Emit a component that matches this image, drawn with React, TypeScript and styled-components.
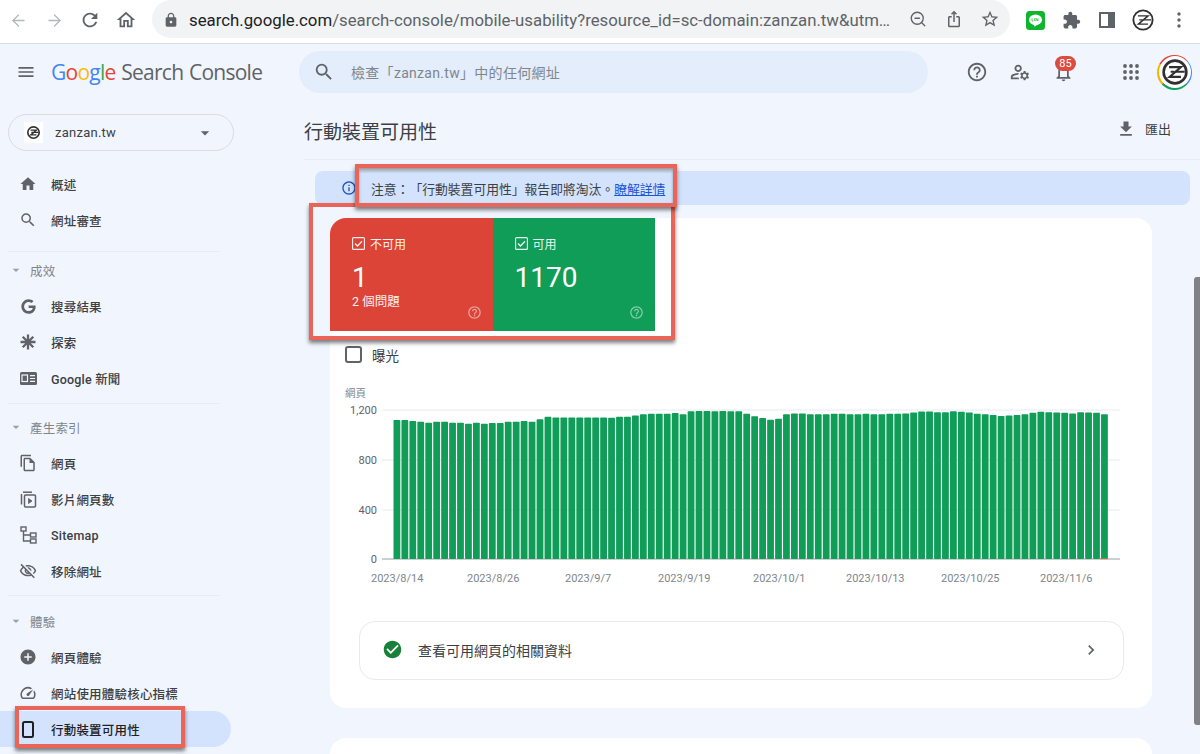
import React, { type FC, type ReactNode } from 'react'
import styled, { createGlobalStyle } from 'styled-components'
import { ArrowLeft, ArrowRight, ZoomOut } from 'lucide-react'
import {
  MdLock,
  MdIosShare,
  MdExtension,
  MdMenu,
  MdSearch,
  MdHelpOutline,
  MdOutlineManageAccounts,
  MdOutlineNotifications,
  MdArrowDropDown,
  MdHome,
  MdOutlineHome,
  MdRefresh,
  MdStarOutline,
  MdOutlineFileCopy,
  MdOutlineVisibilityOff,
  MdAddCircle,
  MdOutlineSpeed,
  MdFileDownload,
  MdInfoOutline,
  MdCheckCircle,
  MdChevronRight,
} from 'react-icons/md'
import { FaGoogle } from 'react-icons/fa'

const FONT = `Roboto, "Noto Sans CJK TC", sans-serif`

const GlobalStyle = createGlobalStyle`
  html, body {
    margin: 0;
    padding: 0;
    height: 100%;
    overflow: hidden;
    background: #f1f5fd;
    font-family: ${FONT};
    text-spacing-trim: space-all;
  }
`

const Page = styled.div`
  position: relative;
  width: 1200px;
  height: 754px;
  overflow: hidden;
  display: flex;
  flex-direction: column;
`

/* browser chrome */
const Toolbar = styled.div`
  height: 43px;
  flex: none;
  background: #fff;
  border-bottom: 1px solid #dadce0;
  display: flex;
  align-items: flex-start;
`

const ToolSlot = styled.div<{ $color?: string }>`
  width: 36px;
  height: 40px;
  flex: none;
  display: flex;
  align-items: center;
  justify-content: center;
  color: ${(p) => p.$color || '#5f6368'};
`

const NavButtons = styled.div`
  display: flex;
  width: 152px;
  flex: none;
`

const AddressBar = styled.div`
  width: 858px;
  height: 38px;
  flex: none;
  box-sizing: border-box;
  padding: 0 2px 0 11px;
  background: #f1f3f4;
  border-radius: 19px;
  display: flex;
  align-items: center;
`

const LockSlot = styled.div`
  width: 16px;
  flex: none;
  margin-right: 10px;
  color: #5f6368;
  display: flex;
  padding-top: 2px;
`

const Url = styled.div`
  width: 711px;
  flex: none;
  font-size: 16.8px;
  color: #5f6368;
  white-space: nowrap;
  overflow: hidden;
  padding-top: 1px;
  b {
    font-weight: 400;
    color: #202124;
  }
`

const Extensions = styled.div`
  display: flex;
  margin-left: 7px;
`

/* search console header */
const Header = styled.div`
  height: 56px;
  flex: none;
  display: flex;
  align-items: center;
`

const Burger = styled.div`
  width: 51px;
  flex: none;
  padding-left: 16px;
  box-sizing: border-box;
  display: flex;
  color: #5f6368;
`

const Brand = styled.div`
  width: 248px;
  flex: none;
  font-family: "Open Sans", Roboto, sans-serif;
  font-size: 21px;
  letter-spacing: -0.75px;
  word-spacing: 1px;
  color: #5f6368;
  white-space: nowrap;
`

const Letter = styled.span<{ $c: string }>`
  color: ${(p) => p.$c};
`

const SearchBox = styled.div`
  width: 629px;
  height: 42px;
  flex: none;
  box-sizing: border-box;
  padding-left: 14px;
  border-radius: 21px;
  background: #e3edfb;
  display: flex;
  align-items: center;
  gap: 16px;
  color: #5f6368;
  font-size: 14px;
  letter-spacing: 0.3px;
`

const SearchHint = styled.span`
  color: #80868b;
`

const HeaderIcons = styled.div`
  display: flex;
  align-items: center;
  margin-left: 27px;
`

const HeaderIcon = styled.div<{ $gap?: number }>`
  position: relative;
  width: 43.5px;
  height: 44px;
  flex: none;
  margin-right: ${(p) => p.$gap || 0}px;
  color: #5f6368;
  display: flex;
  align-items: center;
  justify-content: center;
`

const Badge = styled.span`
  position: absolute;
  top: 6px;
  left: 13px;
  width: 21px;
  height: 15px;
  border-radius: 8px;
  background: #dc4b40;
  color: #fff;
  font-size: 11px;
  line-height: 15px;
  text-align: center;
`

const AvatarRing = styled.div`
  width: 35px;
  height: 35px;
  flex: none;
  margin-left: 4px;
  border-radius: 50%;
  background: conic-gradient(#db4437 0 50deg, #4285f4 50deg 135deg, #0f9d58 135deg 225deg, #f4b400 225deg 300deg, #db4437 300deg);
  display: flex;
  align-items: center;
  justify-content: center;
`

const AvatarInner = styled.div`
  width: 32px;
  height: 32px;
  border-radius: 50%;
  background: #fff;
  display: flex;
  align-items: center;
  justify-content: center;
`

/* body */
const Body = styled.div`
  flex: 1;
  display: flex;
  min-height: 0;
`

const Sidebar = styled.nav`
  width: 240px;
  flex: none;
  padding-top: 14px;
  box-sizing: border-box;
`

const PropertyPicker = styled.div`
  width: 226px;
  height: 37px;
  margin: 0 0 15px 8px;
  box-sizing: border-box;
  border: 1px solid #dadce0;
  border-radius: 19px;
  display: flex;
  align-items: center;
  padding: 0 18px 0 15px;
  font-size: 13px;
  letter-spacing: 0.25px;
  color: #3c4043;
`

const Favicon = styled.span`
  width: 19px;
  height: 21px;
  flex: none;
  background: #fff;
  display: flex;
  align-items: center;
  justify-content: center;
`

const PropertyName = styled.span`
  flex: 1;
  margin-left: 12px;
`

const NavRow = styled.div<{ $active?: boolean }>`
  width: 231px;
  height: 36px;
  box-sizing: border-box;
  padding-left: 19px;
  display: flex;
  align-items: center;
  gap: 14px;
  font-size: 12.5px;
  font-weight: 500;
  letter-spacing: 0.2px;
  color: ${(p) => (p.$active ? '#202124' : '#3c4043')};
  background: ${(p) => (p.$active ? '#d3e3fd' : 'transparent')};
  border-radius: ${(p) => (p.$active ? '0 18px 18px 0' : '0')};
`

const NavIcon = styled.span<{ $active?: boolean }>`
  width: 18px;
  height: 18px;
  flex: none;
  display: flex;
  align-items: center;
  justify-content: center;
  color: ${(p) => (p.$active ? '#202124' : '#5f6368')};
`

const SectionRow = styled.div`
  height: 36px;
  display: flex;
  align-items: center;
  padding-left: 8px;
  font-size: 12.5px;
  color: #80868b;
  gap: 6px;
  letter-spacing: 0.2px;
`

const Caret = styled.span`
  width: 16px;
  display: flex;
  color: #9aa0a6;
`

const Rule = styled.div<{ $top: number; $bottom: number }>`
  width: 212px;
  height: 1px;
  margin: ${(p) => p.$top}px 0 ${(p) => p.$bottom}px 8px;
  background: #e8ecf3;
`

const Main = styled.main`
  flex: 1;
  min-width: 0;
  padding-left: 64px;
`

const TitleBar = styled.div`
  height: 60px;
  box-sizing: border-box;
  border-bottom: 1px solid #e8ecf3;
  padding: 2px 29px 0 0;
  display: flex;
  align-items: center;
  justify-content: space-between;
`

const Title = styled.h1`
  margin: 0;
  font-size: 19px;
  font-weight: 400;
  color: #3c4043;
`

const ExportButton = styled.div`
  display: flex;
  align-items: center;
  gap: 9px;
  font-size: 13px;
  color: #3c4043;
  margin-top: -4px;
`

const Notice = styled.div`
  margin: 11px 10px 13px 11px;
  height: 34px;
  box-sizing: border-box;
  padding-left: 26px;
  border-radius: 8px;
  background: #d3e3fd;
  display: flex;
  align-items: center;
  gap: 14px;
  font-size: 12.8px;
  color: #3c4043;
  a {
    color: #1a56d6;
    text-decoration: underline;
  }
`

const InfoIcon = styled.span`
  display: flex;
  color: #1a56c4;
`

const Card = styled.section`
  width: 822px;
  margin-left: 26px;
  height: 490px;
  box-sizing: border-box;
  background: #fff;
  border-radius: 16px;
`

const NextCard = styled(Card)`
  margin-top: 30px;
`

const Tiles = styled.div`
  display: flex;
`

const Tile = styled.div<{ $bg: string; $round?: boolean }>`
  position: relative;
  width: 162.5px;
  height: 113px;
  box-sizing: border-box;
  padding: 17px 0 0 22px;
  background: ${(p) => p.$bg};
  color: #fff;
  border-top-left-radius: ${(p) => (p.$round ? '16px' : '0')};
`

const TileLabel = styled.div`
  display: flex;
  align-items: center;
  gap: 5px;
  height: 16px;
  font-size: 12px;
  opacity: 0.92;
`

const TileValue = styled.div`
  font-size: 28px;
  line-height: 34px;
  margin-top: 10px;
`

const TileNote = styled.div`
  font-size: 12.5px;
  line-height: 16px;
  margin-top: -1px;
  opacity: 0.92;
`

const TileHelp = styled.span`
  position: absolute;
  right: 11px;
  bottom: 11px;
  display: flex;
  opacity: 0.5;
`

const ImpressionRow = styled.label`
  display: flex;
  align-items: center;
  gap: 10px;
  margin: 15px 0 0 15px;
  height: 17px;
  font-size: 13.5px;
  color: #3c4043;
`

const EmptyBox = styled.span`
  width: 17px;
  height: 17px;
  box-sizing: border-box;
  border: 2px solid #5f6368;
  border-radius: 3px;
`

const ChartSvg = styled.svg`
  display: block;
  width: 790px;
  height: 223px;
  margin: 17px 0 0 10px;
  font-family: ${FONT};
`

const LinkRow = styled.div`
  width: 765px;
  height: 59px;
  margin: 18px 0 0 29px;
  box-sizing: border-box;
  padding: 0 22px 2px 22px;
  border: 1px solid #e8eaed;
  border-radius: 16px;
  display: flex;
  align-items: center;
  gap: 15px;
  font-size: 14px;
  color: #3c4043;
`

const LinkText = styled.span`
  flex: 1;
`

const LinkChevron = styled.span`
  display: flex;
  color: #5f6368;
`

const Scrollbar = styled.div`
  position: absolute;
  right: 0;
  top: 277px;
  width: 6px;
  height: 448px;
  border-radius: 3px 0 0 3px;
  background: #7f8286;
`

const Callout = styled.div<{ $x: number; $y: number; $w: number; $h: number; $inset?: boolean }>`
  position: absolute;
  left: ${(p) => p.$x}px;
  top: ${(p) => p.$y}px;
  width: ${(p) => p.$w}px;
  height: ${(p) => p.$h}px;
  box-sizing: border-box;
  border: 4px solid #e9655a;
  box-shadow: 0 3px 4px rgba(0, 0, 0, 0.5) ${(p) => (p.$inset ? ', inset 0 3px 3px rgba(0, 0, 0, 0.35)' : '')};
  pointer-events: none;
`

const ZLogo: FC<{ size: number; weight?: number }> = ({ size, weight = 2 }) => (
  <svg width={size} height={size} viewBox="0 0 24 24" fill="none" stroke="#303030" strokeWidth={weight}>
    <circle cx="12" cy="12" r="10.500" />
    <path d="M6.500 7.500h11L7 16.500h10.500" strokeWidth={weight * 0.8} />
    <path d="M8 11.800h3.500M12.500 11.800h8.500" strokeWidth={weight * 0.7} />
  </svg>
)

const LineIcon: FC = () => (
  <svg width="19" height="19" viewBox="0 0 19 19">
    <rect width="19" height="19" rx="3.500" fill="#0fb52d" />
    <ellipse cx="9.500" cy="8.700" rx="6.500" ry="5.300" fill="#fff" />
    <path d="M8 13.500c.3.800 0 1.800.3 2 .5.200 3-1.600 4.200-2.700z" fill="#fff" />
    <path d="M6 7.300v2.700h1.300M8.600 7.300v2.700M10 10V7.300l2 2.700V7.300" fill="none" stroke="#0fb52d" strokeWidth="0.700" />
  </svg>
)

const SidePanelIcon: FC = () => (
  <svg width="16" height="16" viewBox="0 0 16 16">
    <rect x="1" y="1" width="14" height="14" fill="none" stroke="#5f6368" strokeWidth="2" />
    <rect x="9" y="1" width="6" height="14" fill="#5f6368" />
  </svg>
)

const DotsIcon: FC = () => (
  <svg width="4" height="16" viewBox="0 0 4 16" fill="#5f6368">
    <circle cx="2" cy="2" r="1.700" />
    <circle cx="2" cy="8" r="1.700" />
    <circle cx="2" cy="14" r="1.700" />
  </svg>
)

const AppsIcon: FC = () => (
  <svg width="16" height="16" viewBox="0 0 16 16" fill="#5f6368">
    {[2, 8, 14].flatMap((y) => [2, 8, 14].map((x) => <circle key={`${x}-${y}`} cx={x} cy={y} r="1.900" />))}
  </svg>
)

const SparkIcon: FC = () => (
  <svg width="16" height="16" viewBox="0 0 16 16" stroke="#5f6368" strokeWidth="2.300">
    <path d="M8 .5v15M.5 8h15M2.700 2.700l10.600 10.600M13.300 2.700 2.700 13.300" />
  </svg>
)

const NewsIcon: FC = () => (
  <svg width="17" height="15" viewBox="0 0 17 15">
    <rect width="17" height="13" y="1" rx="1.500" fill="#5f6368" />
    <rect x="2" y="4" width="5.500" height="6.500" fill="none" stroke="#f1f5fd" strokeWidth="1.200" />
    <path d="M10 4.700h5M10 7.500h5M10 10.300h5" stroke="#f1f5fd" strokeWidth="1.200" />
  </svg>
)

const VideoPagesIcon: FC = () => (
  <svg width="17" height="17" viewBox="0 0 17 17" fill="none" stroke="#5f6368" strokeWidth="1.500">
    <path d="M1.500 3v10.500" />
    <path d="M3 1.200h9" />
    <rect x="4.500" y="4" width="11" height="12" rx="1" />
    <path d="M8.500 7.500v5l3.500-2.500z" fill="#5f6368" strokeWidth="0.800" />
  </svg>
)

const SitemapIcon: FC = () => (
  <svg width="17" height="18" viewBox="0 0 17 18" fill="none" stroke="#5f6368" strokeWidth="1.400">
    <rect x="1" y="1" width="5" height="4" />
    <rect x="10.500" y="7" width="5.500" height="4" />
    <rect x="10.500" y="13" width="5.500" height="4" />
    <path d="M3.500 5v10h7M3.500 9h7" />
  </svg>
)

const PhoneIcon: FC = () => (
  <svg width="14" height="17" viewBox="0 0 14 17">
    <rect x="2" y="1" width="10" height="15" rx="1.500" fill="none" stroke="#202124" strokeWidth="2" />
  </svg>
)

const TileCheck: FC = () => (
  <svg width="13" height="13" viewBox="0 0 13 13" fill="none" stroke="#fff" strokeWidth="1.100">
    <rect x="0.600" y="0.600" width="11.800" height="11.800" rx="1" />
    <path d="M3 6.500l2.500 2.500 4.500-4.800" strokeWidth="1.300" />
  </svg>
)

const NavItem: FC<{ icon: ReactNode; label: string; active?: boolean }> = ({ icon, label, active }) => (
  <NavRow $active={active}>
    <NavIcon $active={active}>{icon}</NavIcon>
    {label}
  </NavRow>
)

const Section: FC<{ label: string }> = ({ label }) => (
  <SectionRow>
    <Caret>
      <MdArrowDropDown size={16} />
    </Caret>
    {label}
  </SectionRow>
)

const BARS = [
  1120, 1120, 1112, 1106, 1098, 1106, 1106, 1098, 1098, 1090, 1098, 1090, 1095, 1095, 1105, 1105, 1112, 1105, 1125,
  1145, 1140, 1140, 1140, 1140, 1140, 1140, 1140, 1138, 1146, 1146, 1155, 1165, 1170, 1170, 1170, 1175, 1165, 1190,
  1192, 1192, 1190, 1192, 1190, 1190, 1170, 1150, 1135, 1122, 1130, 1165, 1172, 1172, 1165, 1165, 1165, 1170, 1170,
  1165, 1165, 1170, 1165, 1165, 1170, 1170, 1172, 1180, 1188, 1188, 1182, 1182, 1190, 1186, 1180, 1170, 1165, 1160,
  1152, 1155, 1160, 1165, 1178, 1186, 1182, 1180, 1178, 1172, 1182, 1180, 1178, 1165,
]
const Y_TICKS = [
  { label: '1,200', y: 30 },
  { label: '800', y: 80 },
  { label: '400', y: 130 },
  { label: '0', y: 179 },
]
const X_TICKS = [
  { label: '2023/8/14', x: 31 },
  { label: '2023/8/26', x: 127 },
  { label: '2023/9/7', x: 225 },
  { label: '2023/9/19', x: 318 },
  { label: '2023/10/1', x: 413 },
  { label: '2023/10/13', x: 506 },
  { label: '2023/10/25', x: 601 },
  { label: '2023/11/6', x: 700 },
]

// svg origin sits at page x 340, y 380
const Chart: FC = () => (
  <ChartSvg viewBox="0 0 790 223">
    <text x="5" y="17" fontSize="10.500" fill="#80868b">網頁</text>
    {Y_TICKS.map((t) => (
      <g key={t.label}>
        <text x="37" y={t.y + 4} fontSize="11" fill="#5f6368" textAnchor="end">{t.label}</text>
        <line x1="42" x2="780" y1={t.y} y2={t.y} stroke={t.y === 179 ? '#9aa0a6' : '#e8eaed'} />
      </g>
    ))}
    {BARS.map((v, i) => {
      const h = (v / 1200) * 149
      return <rect key={i} x={53.500 + i * 7.950} y={179 - h} width={6.800} height={h} rx={0.800} fill="#0f9d58" />
    })}
    <rect x="760.500" y="178" width="7" height="1.200" fill="#a57a3c" />
    {X_TICKS.map((t) => (
      <text key={t.label} x={t.x} y={202} fontSize="11" fill="#80868b">{t.label}</text>
    ))}
  </ChartSvg>
)

const App: FC = () => (
  <Page lang="zh-TW">
    <GlobalStyle />
    <Toolbar>
      <NavButtons>
        <ToolSlot $color="#b4b7bb"><ArrowLeft size={19} strokeWidth={1.600} /></ToolSlot>
        <ToolSlot $color="#b4b7bb"><ArrowRight size={19} strokeWidth={1.600} /></ToolSlot>
        <ToolSlot><MdRefresh size={22} /></ToolSlot>
        <ToolSlot><MdOutlineHome size={22} /></ToolSlot>
      </NavButtons>
      <AddressBar>
        <LockSlot><MdLock size={16} /></LockSlot>
        <Url><b>search.google.com</b>/search-console/mobile-usability?resource_id=sc-domain:zanzan.tw&amp;utm…</Url>
        <ToolSlot><ZoomOut size={18} strokeWidth={1.800} /></ToolSlot>
        <ToolSlot><MdIosShare size={18} /></ToolSlot>
        <ToolSlot><MdStarOutline size={20} /></ToolSlot>
      </AddressBar>
      <Extensions>
        <ToolSlot><LineIcon /></ToolSlot>
        <ToolSlot><MdExtension size={19} /></ToolSlot>
        <ToolSlot><SidePanelIcon /></ToolSlot>
        <ToolSlot><ZLogo size={22} /></ToolSlot>
        <ToolSlot><DotsIcon /></ToolSlot>
      </Extensions>
    </Toolbar>

    <Header>
      <Burger><MdMenu size={20} /></Burger>
      <Brand>
        <Letter $c="#4285f4">G</Letter>
        <Letter $c="#ea4335">o</Letter>
        <Letter $c="#fbbc05">o</Letter>
        <Letter $c="#4285f4">g</Letter>
        <Letter $c="#34a853">l</Letter>
        <Letter $c="#ea4335">e</Letter> Search Console
      </Brand>
      <SearchBox>
        <MdSearch size={22} />
        <SearchHint>檢查「zanzan.tw」中的任何網址</SearchHint>
      </SearchBox>
      <HeaderIcons>
        <HeaderIcon><MdHelpOutline size={22} /></HeaderIcon>
        <HeaderIcon><MdOutlineManageAccounts size={22} /></HeaderIcon>
        <HeaderIcon $gap={24}>
          <MdOutlineNotifications size={21} />
          <Badge>85</Badge>
        </HeaderIcon>
        <HeaderIcon><AppsIcon /></HeaderIcon>
        <AvatarRing>
          <AvatarInner><ZLogo size={26} weight={2.400} /></AvatarInner>
        </AvatarRing>
      </HeaderIcons>
    </Header>

    <Body>
      <Sidebar>
        <PropertyPicker>
          <Favicon><ZLogo size={13} weight={3} /></Favicon>
          <PropertyName>zanzan.tw</PropertyName>
          <MdArrowDropDown size={20} color="#5f6368" />
        </PropertyPicker>
        <NavItem icon={<MdHome size={18} />} label="概述" />
        <NavItem icon={<MdSearch size={18} />} label="網址審查" />
        <Rule $top={13} $bottom={0} />
        <Section label="成效" />
        <NavItem icon={<FaGoogle size={15} />} label="搜尋結果" />
        <NavItem icon={<SparkIcon />} label="探索" />
        <NavItem icon={<NewsIcon />} label="Google 新聞" />
        <Rule $top={7} $bottom={5} />
        <Section label="產生索引" />
        <NavItem icon={<MdOutlineFileCopy size={18} />} label="網頁" />
        <NavItem icon={<VideoPagesIcon />} label="影片網頁數" />
        <NavItem icon={<SitemapIcon />} label="Sitemap" />
        <NavItem icon={<MdOutlineVisibilityOff size={18} />} label="移除網址" />
        <Rule $top={6} $bottom={7} />
        <Section label="體驗" />
        <NavItem icon={<MdAddCircle size={18} />} label="網頁體驗" />
        <NavItem icon={<MdOutlineSpeed size={18} />} label="網站使用體驗核心指標" />
        <NavItem icon={<PhoneIcon />} label="行動裝置可用性" active />
      </Sidebar>

      <Main>
        <TitleBar>
          <Title>行動裝置可用性</Title>
          <ExportButton>
            <MdFileDownload size={20} color="#5f6368" />
            匯出
          </ExportButton>
        </TitleBar>
        <Notice>
          <InfoIcon><MdInfoOutline size={16} /></InfoIcon>
          <span>注意：「行動裝置可用性」報告即將淘汰。<a>瞭解詳情</a></span>
        </Notice>
        <Card>
          <Tiles>
            <Tile $bg="#db4437" $round>
              <TileLabel><TileCheck />不可用</TileLabel>
              <TileValue>1</TileValue>
              <TileNote>2 個問題</TileNote>
              <TileHelp><MdHelpOutline size={15} /></TileHelp>
            </Tile>
            <Tile $bg="#0f9d58">
              <TileLabel><TileCheck />可用</TileLabel>
              <TileValue>1170</TileValue>
              <TileHelp><MdHelpOutline size={15} /></TileHelp>
            </Tile>
          </Tiles>
          <ImpressionRow>
            <EmptyBox />
            曝光
          </ImpressionRow>
          <Chart />
          <LinkRow>
            <MdCheckCircle size={21} color="#188038" />
            <LinkText>查看可用網頁的相關資料</LinkText>
            <LinkChevron><MdChevronRight size={20} /></LinkChevron>
          </LinkRow>
        </Card>
        <NextCard />
      </Main>
    </Body>

    <Scrollbar />
    <Callout $x={309} $y={203} $w={366} $h={137} />
    <Callout $x={355} $y={164} $w={322} $h={43} $inset />
    <Callout $x={15} $y={706} $w={170} $h={42} />
  </Page>
)

export default App
